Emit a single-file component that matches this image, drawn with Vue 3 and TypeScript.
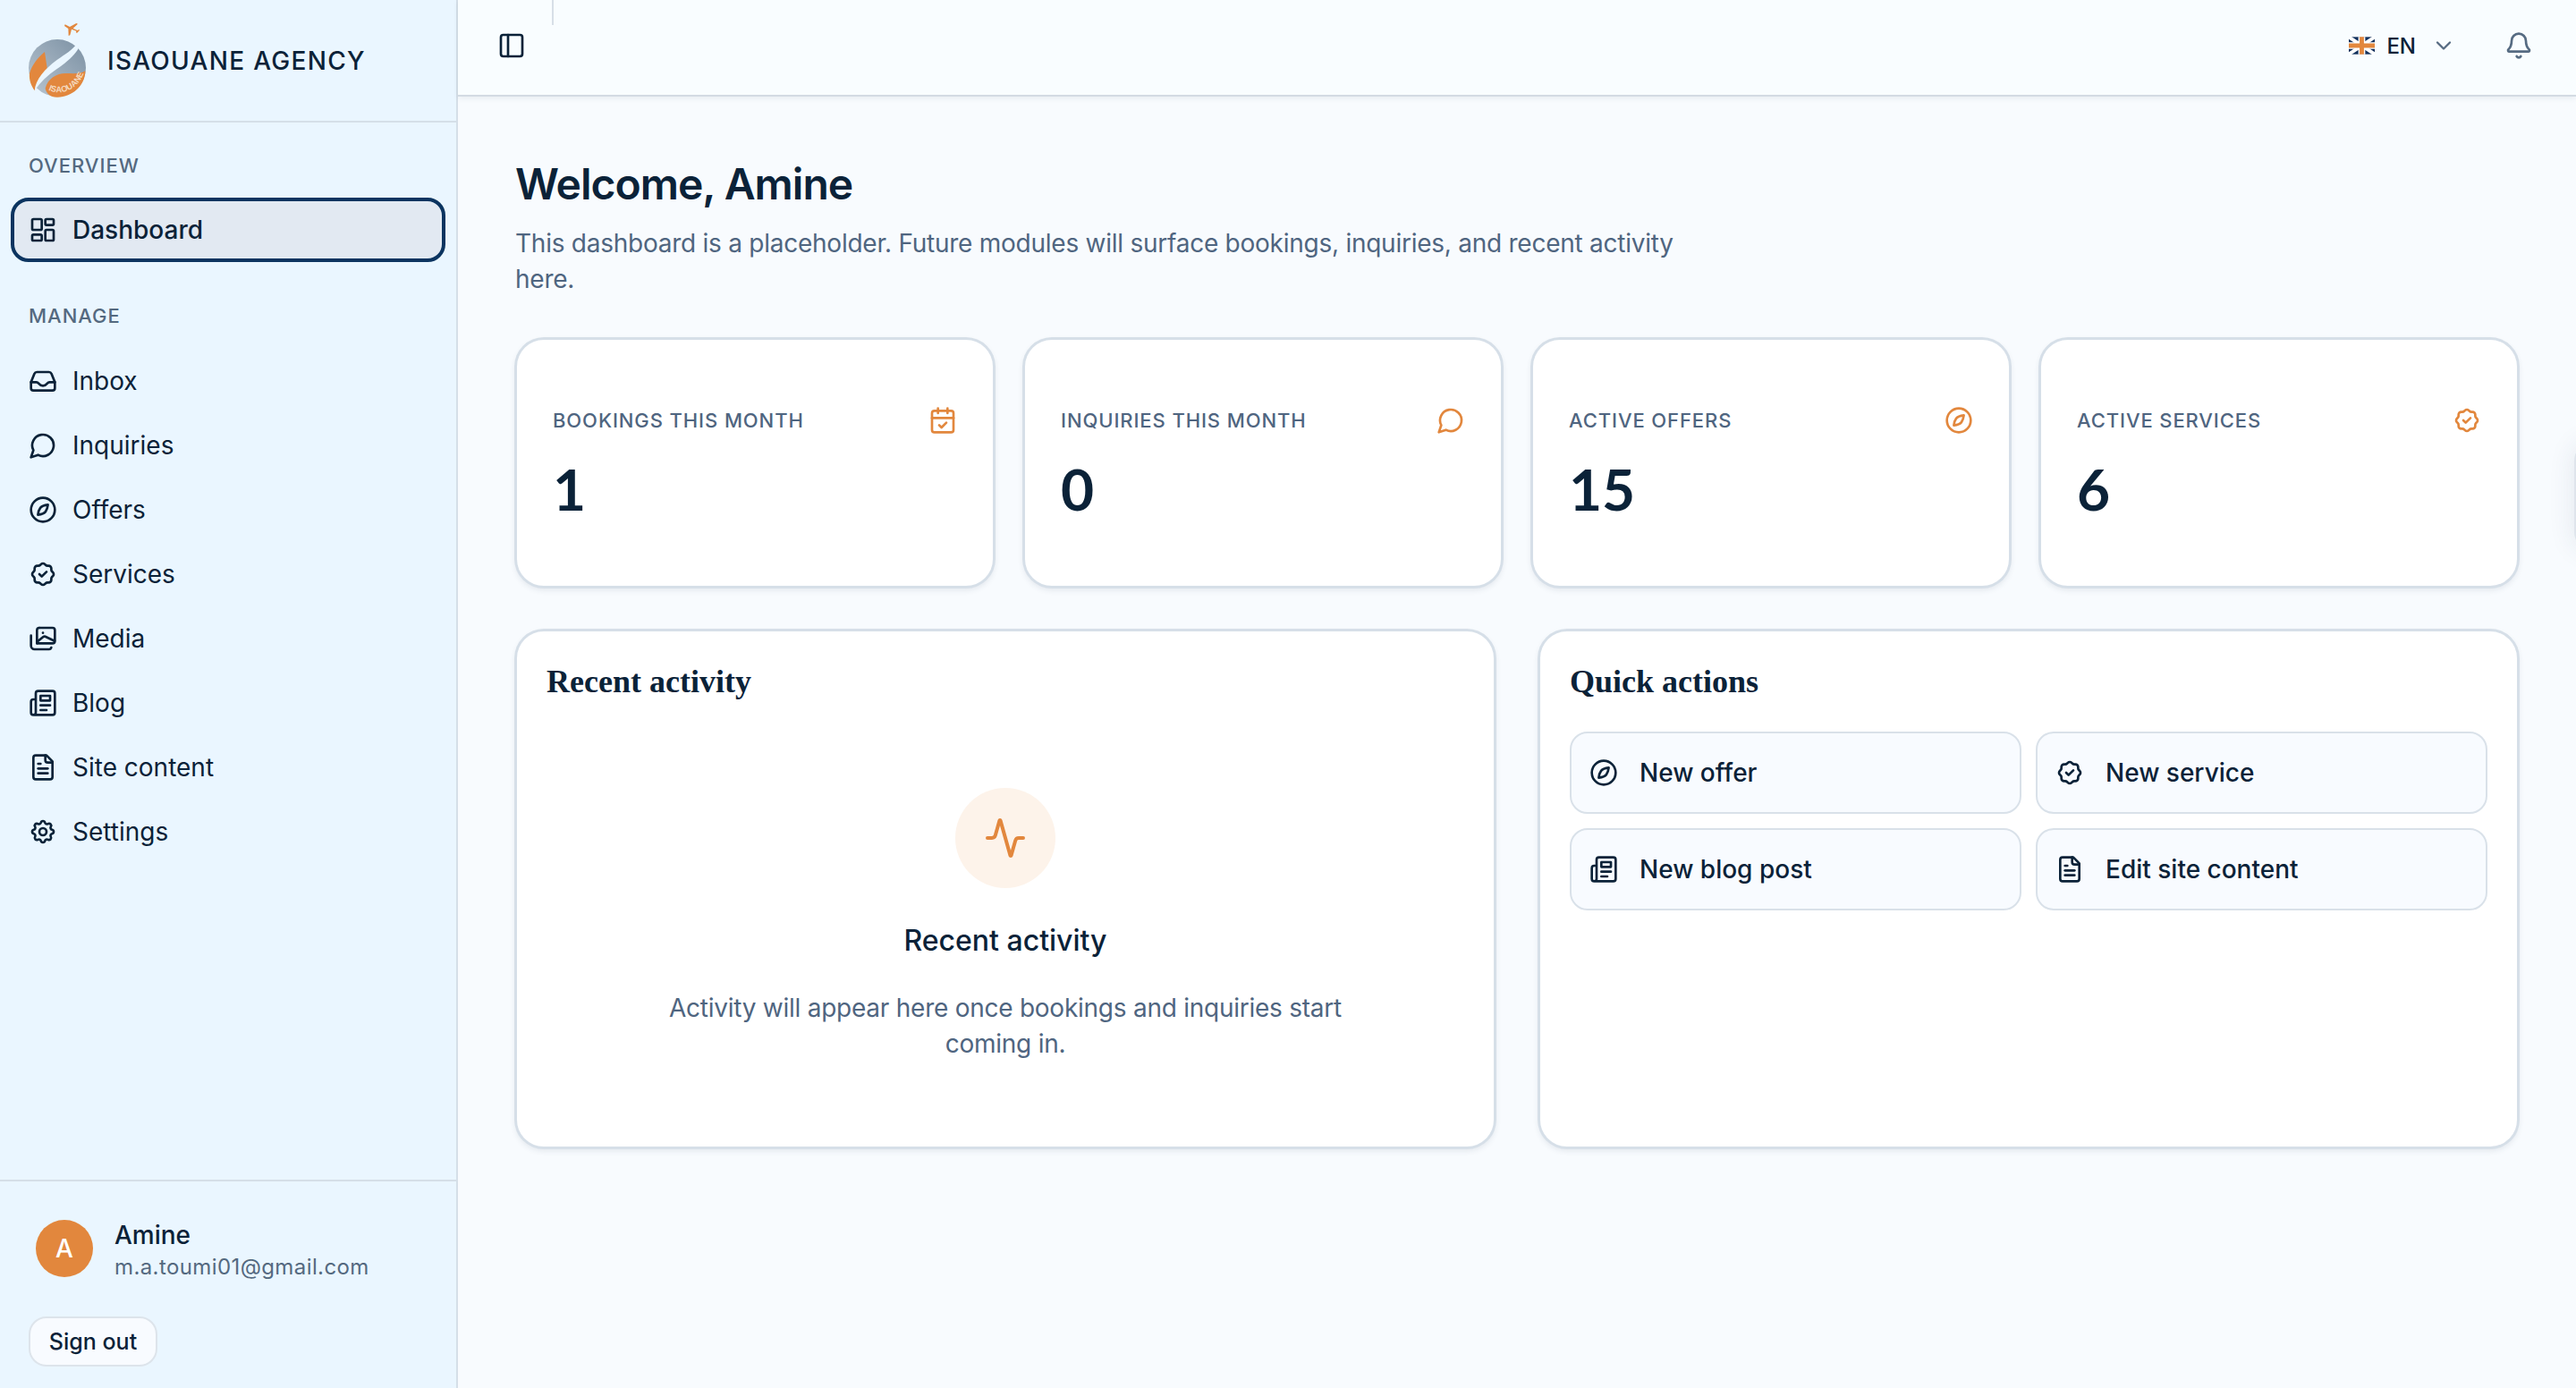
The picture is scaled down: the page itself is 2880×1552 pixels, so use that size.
<script setup lang="ts">
type NavItem = { label: string; icon: string }

// outline icons, one entry per stroke
const icons: Record<string, string[]> = {
  dashboard: [
    'M4 3h6a1 1 0 0 1 1 1v7a1 1 0 0 1-1 1H4a1 1 0 0 1-1-1V4a1 1 0 0 1 1-1z',
    'M15 3h5a1 1 0 0 1 1 1v3a1 1 0 0 1-1 1h-5a1 1 0 0 1-1-1V4a1 1 0 0 1 1-1z',
    'M15 12h5a1 1 0 0 1 1 1v7a1 1 0 0 1-1 1h-5a1 1 0 0 1-1-1v-7a1 1 0 0 1 1-1z',
    'M4 16h6a1 1 0 0 1 1 1v3a1 1 0 0 1-1 1H4a1 1 0 0 1-1-1v-3a1 1 0 0 1 1-1z'
  ],
  inbox: [
    'M2 13 4.8 6a2.4 2.4 0 0 1 2.2-1.5h10A2.4 2.4 0 0 1 19.2 6L22 13v5a2 2 0 0 1-2 2H4a2 2 0 0 1-2-2z',
    'M2 13h4.5c1 0 1.5.6 2 1.2.8 1 2 1.8 3.5 1.8s2.7-.8 3.5-1.8c.5-.6 1-1.2 2-1.2H22'
  ],
  message: ['M7.9 20A9 9 0 1 0 4 16.1L2 22Z'],
  compass: [
    'M12 2a10 10 0 1 0 0 20 10 10 0 0 0 0-20z',
    'M16.2 7.8c-2.6.3-5.4 1.3-6.4 2.6-1 1.3-1.7 3.4-2 5.8 2.6-.3 5.4-1.3 6.4-2.6 1-1.3 1.7-3.4 2-5.8z'
  ],
  badge: [
    'M5 7.2a2.2 2.2 0 0 1 2.2-2.2h1a2.2 2.2 0 0 0 1.55-.64l.7-.7a2.2 2.2 0 0 1 3.12 0l.7.7c.412.41.97.64 1.55.64h1a2.2 2.2 0 0 1 2.2 2.2v1c0 .58.23 1.138.64 1.55l.7.7a2.2 2.2 0 0 1 0 3.12l-.7.7a2.2 2.2 0 0 0-.64 1.55v1a2.2 2.2 0 0 1-2.2 2.2h-1a2.2 2.2 0 0 0-1.55.64l-.7.7a2.2 2.2 0 0 1-3.12 0l-.7-.7a2.2 2.2 0 0 0-1.55-.64h-1a2.2 2.2 0 0 1-2.2-2.2v-1a2.2 2.2 0 0 0-.64-1.55l-.7-.7a2.2 2.2 0 0 1 0-3.12l.7-.7a2.2 2.2 0 0 0 .64-1.55v-1',
    'M9 12l2 2 4-4'
  ],
  media: [
    'M9 3h11a2 2 0 0 1 2 2v9a2 2 0 0 1-2 2H7',
    'M7 16V5a2 2 0 0 1 2-2',
    'M2 9.5V18a3 3 0 0 0 3 3h12a2 2 0 0 0 2-1.5',
    'M12 7.2v.1',
    'M7.5 14.5l4.6-3.8a2 2 0 0 1 2.6 0L21.8 14'
  ],
  news: [
    'M4 22h16a2 2 0 0 0 2-2V4a2 2 0 0 0-2-2H8a2 2 0 0 0-2 2v16a2 2 0 0 1-2 2Zm0 0a2 2 0 0 1-2-2v-9c0-1.1.9-2 2-2h2',
    'M18 14h-8',
    'M15 18h-5',
    'M10 6h8v4h-8V6Z'
  ],
  file: [
    'M15 2H6a2 2 0 0 0-2 2v16a2 2 0 0 0 2 2h12a2 2 0 0 0 2-2V7Z',
    'M14 2v4a2 2 0 0 0 2 2h4',
    'M10 9H8',
    'M16 13H8',
    'M16 17H8'
  ],
  settings: [
    'M10.325 4.317c.426-1.756 2.924-1.756 3.35 0a1.724 1.724 0 0 0 2.573 1.066c1.543-.94 3.31.826 2.37 2.37a1.724 1.724 0 0 0 1.065 2.572c1.756.426 1.756 2.924 0 3.35a1.724 1.724 0 0 0-1.066 2.573c.94 1.543-.826 3.31-2.37 2.37a1.724 1.724 0 0 0-2.572 1.065c-.426 1.756-2.924 1.756-3.35 0a1.724 1.724 0 0 0-2.573-1.066c-1.543.94-3.31-.826-2.37-2.37a1.724 1.724 0 0 0-1.065-2.572c-1.756-.426-1.756-2.924 0-3.35a1.724 1.724 0 0 0 1.066-2.573c-.94-1.543.826-3.31 2.37-2.37 1 .608 2.296.07 2.572-1.065z',
    'M12 9a3 3 0 1 0 0 6 3 3 0 0 0 0-6z'
  ],
  calendar: [
    'M8 2v4',
    'M16 2v4',
    'M5 4h14a2 2 0 0 1 2 2v14a2 2 0 0 1-2 2H5a2 2 0 0 1-2-2V6a2 2 0 0 1 2-2z',
    'M3 10h18',
    'M9 16l2 2 4-4'
  ],
  panel: ['M5 3h14a2 2 0 0 1 2 2v14a2 2 0 0 1-2 2H5a2 2 0 0 1-2-2V5a2 2 0 0 1 2-2z', 'M9 3v18'],
  chevron: ['m6 9 6 6 6-6'],
  bell: [
    'M10.268 21a2 2 0 0 0 3.464 0',
    'M3.262 15.326A1 1 0 0 0 4 17h16a1 1 0 0 0 .74-1.673C19.41 13.956 18 12.499 18 8A6 6 0 0 0 6 8c0 4.499-1.411 5.956-2.738 7.326'
  ],
  activity: ['M22 12h-2.48a2 2 0 0 0-1.93 1.46l-2.35 8.36a.25.25 0 0 1-.48 0L9.24 2.18a.25.25 0 0 0-.48 0l-2.35 8.36A2 2 0 0 1 4.49 12H2']
}

const manageItems: NavItem[] = [
  { label: 'Inbox', icon: 'inbox' },
  { label: 'Inquiries', icon: 'message' },
  { label: 'Offers', icon: 'compass' },
  { label: 'Services', icon: 'badge' },
  { label: 'Media', icon: 'media' },
  { label: 'Blog', icon: 'news' },
  { label: 'Site content', icon: 'file' },
  { label: 'Settings', icon: 'settings' }
]

const stats = [
  { label: 'Bookings this month', value: '1', icon: 'calendar' },
  { label: 'Inquiries this month', value: '0', icon: 'message' },
  { label: 'Active offers', value: '15', icon: 'compass' },
  { label: 'Active services', value: '6', icon: 'badge' }
]

const actions: NavItem[] = [
  { label: 'New offer', icon: 'compass' },
  { label: 'New service', icon: 'badge' },
  { label: 'New blog post', icon: 'news' },
  { label: 'Edit site content', icon: 'file' }
]
</script>

<template>
  <div class="layout">
    <aside class="sidebar">
      <div class="brand">
        <svg class="logo" viewBox="90 66 198 264" width="66" height="88">
          <defs>
            <linearGradient id="globe" x1="0" y1="1" x2="1" y2="0">
              <stop offset="0" stop-color="#b9c6d1" />
              <stop offset="1" stop-color="#7b90a3" />
            </linearGradient>
            <path id="logoArc" d="M162 296C205 316 262 296 282 236" />
          </defs>
          <circle cx="192" cy="222" r="96" fill="url(#globe)" />
          <path d="M99 240C108 212 124 190 150 168L158 222C148 244 130 266 116 298 104 280 97 262 99 240Z" fill="#e2873d" />
          <path d="M152 290C160 258 190 240 220 240 240 240 268 244 286 232 286 282 240 322 190 320 170 320 155 308 152 290Z" fill="#e2873d" />
          <path d="M268 105C286 150 240 192 190 226 160 246 135 270 116 298 120 260 150 226 190 196 226 170 268 150 268 105Z" fill="#eaf6ff" />
          <path d="M218 76l16 8 22-12 5 2-16 15 15 7 5-3 2 2-6 7-3 3-3-2 1-5-16-6-5 20-5 2-1-24-13-9z" fill="#e2873d" />
          <text class="logo-text"><textPath href="#logoArc">ISAOUANE</textPath></text>
        </svg>
        <span class="brand-name">ISAOUANE AGENCY</span>
      </div>

      <div class="nav-label first">Overview</div>
      <div class="nav-row active">
        <svg class="icon" viewBox="0 0 24 24"><path v-for="d in icons.dashboard" :key="d" :d="d" /></svg>
        <span>Dashboard</span>
      </div>

      <div class="nav-label">Manage</div>
      <div v-for="item in manageItems" :key="item.label" class="nav-row">
        <svg class="icon" viewBox="0 0 24 24"><path v-for="d in icons[item.icon]" :key="d" :d="d" /></svg>
        <span>{{ item.label }}</span>
      </div>

      <div class="user">
        <div class="user-info">
          <div class="avatar">A</div>
          <div>
            <div class="user-name">Amine</div>
            <div class="user-mail">m.a.toumi01@gmail.com</div>
          </div>
        </div>
        <button class="sign-out">Sign out</button>
      </div>
    </aside>

    <div class="main">
      <header class="topbar">
        <span class="tick"></span>
        <svg class="icon" viewBox="0 0 24 24"><path v-for="d in icons.panel" :key="d" :d="d" /></svg>
        <div class="topbar-right">
          <div class="lang">
            <svg class="flag" viewBox="0 0 60 40" width="29" height="20">
              <rect width="60" height="40" fill="#12305c" />
              <path d="M0 0 60 40M60 0 0 40" stroke="#fff" stroke-width="8" />
              <path d="M30 0v40M0 20h60" stroke="#fff" stroke-width="16" />
              <path d="M30 0v40M0 20h60" stroke="#e2873d" stroke-width="10" />
            </svg>
            <span class="lang-code">EN</span>
            <svg class="icon small muted" viewBox="0 0 24 24"><path v-for="d in icons.chevron" :key="d" :d="d" /></svg>
          </div>
          <svg class="icon muted" viewBox="0 0 24 24"><path v-for="d in icons.bell" :key="d" :d="d" /></svg>
        </div>
      </header>

      <main class="content">
        <h1>Welcome, Amine</h1>
        <p class="lead">This dashboard is a placeholder. Future modules will surface bookings, inquiries, and recent activity here.</p>

        <section class="stats">
          <div v-for="stat in stats" :key="stat.label" class="card stat">
            <div class="stat-top">
              <span class="stat-label">{{ stat.label }}</span>
              <svg class="icon orange" viewBox="0 0 24 24"><path v-for="d in icons[stat.icon]" :key="d" :d="d" /></svg>
            </div>
            <div class="stat-value">{{ stat.value }}</div>
          </div>
        </section>

        <section class="panels">
          <div class="card panel">
            <h2>Recent activity</h2>
            <div class="empty">
              <div class="empty-circle">
                <svg class="icon big orange" viewBox="0 0 24 24"><path v-for="d in icons.activity" :key="d" :d="d" /></svg>
              </div>
              <div class="empty-title">Recent activity</div>
              <p class="empty-text">Activity will appear here once bookings and inquiries start coming in.</p>
            </div>
          </div>

          <div class="card panel">
            <h2>Quick actions</h2>
            <div class="actions">
              <div v-for="action in actions" :key="action.label" class="action">
                <svg class="icon" viewBox="0 0 24 24"><path v-for="d in icons[action.icon]" :key="d" :d="d" /></svg>
                <span>{{ action.label }}</span>
              </div>
            </div>
          </div>
        </section>
      </main>
    </div>

    <div class="peek"></div>
  </div>
</template>

<style scoped>
.layout {
  display: flex;
  height: 1552px;
  overflow: hidden;
  position: relative;
  background: #f8fbfe;
  color: #0b2238;
  font-family: Inter, "Noto Sans", sans-serif;
  font-size: 28px;
}

.icon {
  width: 32px;
  height: 32px;
  flex: none;
  fill: none;
  stroke: currentColor;
  stroke-width: 2;
  stroke-linecap: round;
  stroke-linejoin: round;
}
.icon.small { width: 28px; height: 28px; }
.icon.big { width: 48px; height: 48px; }
.muted { color: #566b82; }
.orange { color: #e2873d; }

/* sidebar */
.sidebar {
  width: 512px;
  flex: none;
  box-sizing: border-box;
  display: flex;
  flex-direction: column;
  background: #eaf6ff;
  border-right: 2px solid #d5dfe8;
}
.brand {
  height: 137px;
  box-sizing: border-box;
  display: flex;
  align-items: center;
  gap: 24px;
  padding: 0 0 0 30px;
  border-bottom: 2px solid #d5dfe8;
}
.logo { flex: none; }
.logo-text {
  font-family: "Liberation Sans", sans-serif;
  font-size: 28px;
  font-weight: 700;
  fill: #f4d9bf;
}
.brand-name {
  font-size: 28px;
  font-weight: 500;
  letter-spacing: 1.3px;
}
.nav-label {
  height: 30px;
  margin: 45px 0 22px 32px;
  line-height: 30px;
  font-size: 22px;
  font-weight: 500;
  letter-spacing: 1px;
  text-transform: uppercase;
  color: #54697f;
}
.nav-label.first { margin-top: 33px; margin-bottom: 21px; }
.nav-row {
  height: 72px;
  display: flex;
  align-items: center;
  gap: 17px;
  padding: 0 0 0 32px;
  font-size: 28px;
}
.nav-row.active {
  box-sizing: border-box;
  margin: 0 12px;
  padding-left: 16px;
  border: 4px solid #0b3460;
  border-radius: 20px;
  background: #e2e9f2;
  font-weight: 500;
}
.user {
  margin-top: auto;
  border-top: 2px solid #d5dfe8;
  padding: 42px 32px 24px;
}
.user-info {
  display: flex;
  align-items: flex-start;
  gap: 24px;
  padding-left: 8px;
}
.avatar {
  width: 64px;
  height: 64px;
  margin-top: 1px;
  border-radius: 50%;
  background: #e2873d;
  color: #fff;
  display: flex;
  align-items: center;
  justify-content: center;
  font-size: 28px;
  font-weight: 500;
}
.user-name { font-size: 28px; line-height: 36px; font-weight: 500; }
.user-mail { font-size: 24px; line-height: 36px; letter-spacing: 0.4px; color: #54697f; }
.sign-out {
  display: block;
  margin-top: 37px;
  width: 144px;
  height: 56px;
  padding: 0;
  border: 2px solid #dde4eb;
  border-radius: 20px;
  background: #f8fbff;
  color: #0b2238;
  font: 500 25px Inter, sans-serif;
}

/* top bar */
.main { flex: 1; min-width: 0; }
.topbar {
  height: 108px;
  box-sizing: border-box;
  position: relative;
  display: flex;
  align-items: center;
  padding: 0 48px 4px 44px;
  background: #f9fdff;
  border-bottom: 2px solid #d3dbe3;
  box-shadow: 0 2px 6px rgba(40, 60, 90, 0.08);
}
.tick {
  position: absolute;
  left: 105px;
  top: 0;
  width: 2px;
  height: 28px;
  background: #d7dfe7;
}
.topbar-right {
  margin-left: auto;
  display: flex;
  align-items: center;
  gap: 54px;
}
.lang { display: flex; align-items: center; }
.lang-code { margin: 0 17px 0 13px; font-weight: 500; font-size: 24px; }
.flag { display: block; }

/* content */
.content { padding: 68px 64px 0; }
h1 {
  margin: 0;
  font-size: 48px;
  line-height: 60px;
  font-weight: 600;
  letter-spacing: -1px;
}
.lead {
  margin: 16px 0 0;
  max-width: 1344px;
  font-size: 28px;
  line-height: 40px;
  letter-spacing: -0.25px;
  color: #4f6580;
}
.card {
  box-sizing: border-box;
  background: #fff;
  border: 2px solid #d6dfe8;
  border-radius: 32px;
  box-shadow: 0 0 0 1px #d6dfe8, 0 3px 6px rgba(40, 60, 90, 0.1);
}
.stats {
  margin-top: 46px;
  display: grid;
  grid-template-columns: repeat(4, 1fr);
  gap: 32px;
}
.stat { height: 279px; padding: 74px 40px 0; }
.stat-top {
  display: flex;
  align-items: center;
  justify-content: space-between;
}
.stat-label {
  font-size: 22px;
  font-weight: 500;
  letter-spacing: 0.9px;
  text-transform: uppercase;
  color: #4f6580;
}
.stat-value {
  margin-top: 23px;
  font-family: Lato, Inter, sans-serif;
  font-size: 64px;
  line-height: 76px;
  font-weight: 700;
}
.panels {
  margin-top: 47px;
  display: grid;
  grid-template-columns: 1fr 1fr;
  gap: 48px;
}
.panel { height: 580px; padding: 34px 33px; }
h2 {
  margin: 0;
  font-family: "Liberation Serif", serif;
  font-size: 36px;
  line-height: 44px;
  font-weight: 700;
}
.empty {
  margin-top: 97px;
  display: flex;
  flex-direction: column;
  align-items: center;
  text-align: center;
}
.empty-circle {
  width: 112px;
  height: 112px;
  border-radius: 50%;
  background: #fdf3ea;
  display: flex;
  align-items: center;
  justify-content: center;
}
.empty-title { margin-top: 37px; font-size: 32px; line-height: 44px; font-weight: 500; }
.empty-text {
  margin: 33px 0 0;
  width: 770px;
  line-height: 40px;
  letter-spacing: -0.25px;
  color: #4f6580;
}
.actions {
  margin-top: 34px;
  display: grid;
  grid-template-columns: 1fr 1fr;
  gap: 16px;
}
.action {
  height: 92px;
  box-sizing: border-box;
  display: flex;
  align-items: center;
  gap: 24px;
  padding: 0 20px;
  border: 2px solid #d9e1e9;
  border-radius: 20px;
  background: #f8fbff;
  font-weight: 500;
}

/* edge of a floating widget that sits mostly off screen */
.peek {
  position: absolute;
  left: 2878px;
  top: 495px;
  width: 120px;
  height: 120px;
  border-radius: 20px;
  background: #dfe5ec;
  box-shadow: 0 0 30px rgba(40, 60, 90, 0.1);
}
</style>

<style>
html, body { margin: 0; background: #f8fbfe; }
</style>
